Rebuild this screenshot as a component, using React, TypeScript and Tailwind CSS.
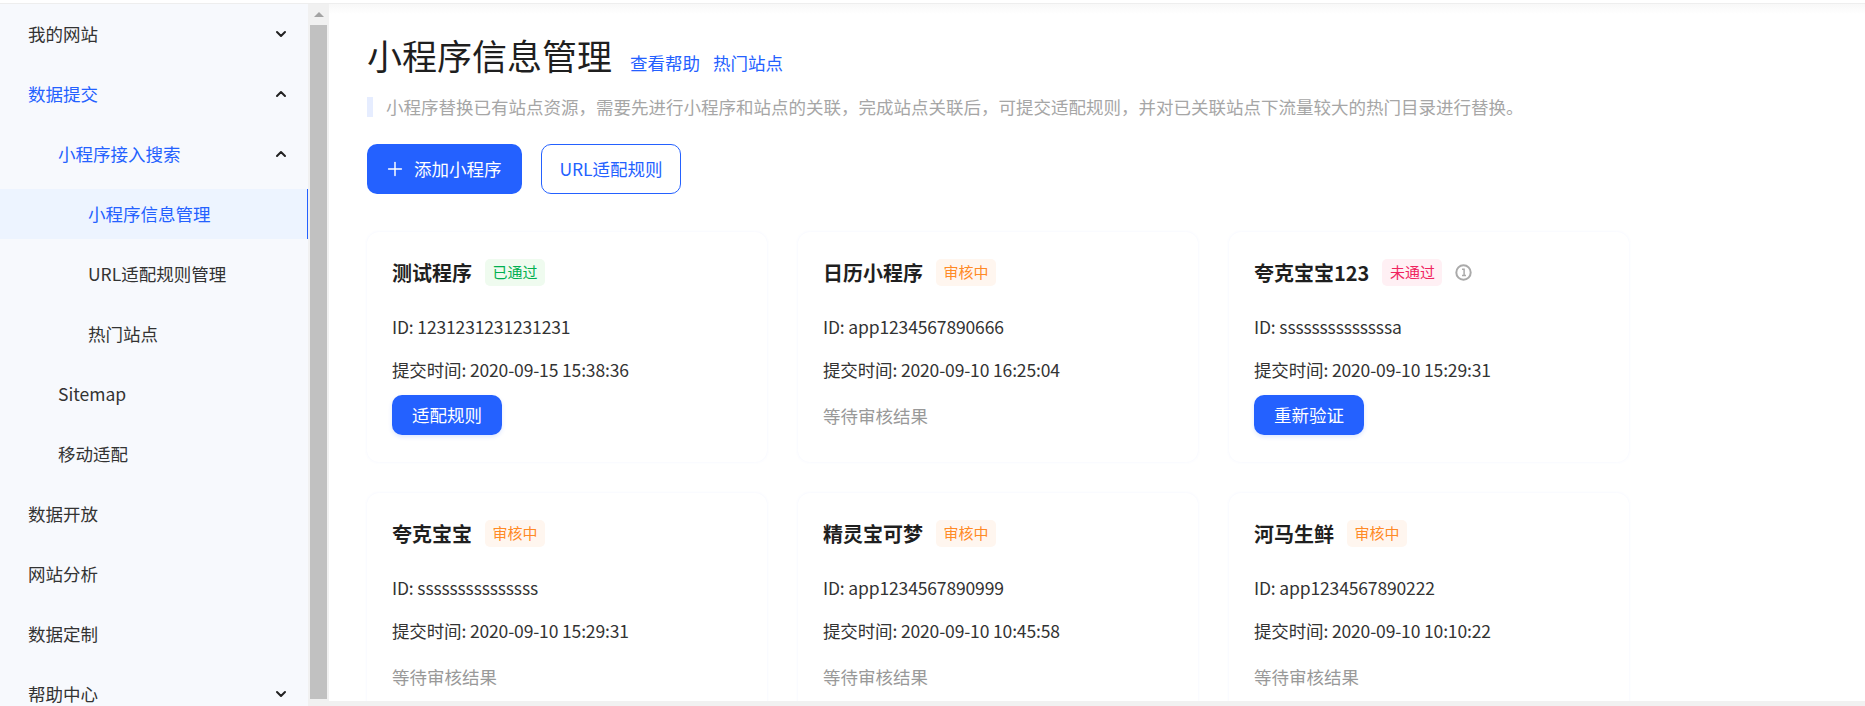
import { Plus, ChevronDown, ChevronUp } from "lucide-react";

const FONT = "[font-family:'Noto_Sans_CJK_SC','Noto_Sans',sans-serif]";

type NavItem = { label: string; level: 0 | 1 | 2; active?: boolean; open?: boolean; current?: boolean };

const navItems: NavItem[] = [
  { label: "我的网站", level: 0, open: false },
  { label: "数据提交", level: 0, active: true, open: true },
  { label: "小程序接入搜索", level: 1, active: true, open: true },
  { label: "小程序信息管理", level: 2, active: true, current: true },
  { label: "URL适配规则管理", level: 2 },
  { label: "热门站点", level: 2 },
  { label: "Sitemap", level: 1 },
  { label: "移动适配", level: 1 },
  { label: "数据开放", level: 0 },
  { label: "网站分析", level: 0 },
  { label: "数据定制", level: 0 },
  { label: "帮助中心", level: 0, open: false },
];

type Status = "ok" | "pending" | "failed";

type Program = { name: string; id: string; time: string; status: Status; action?: string };

const programs: Program[] = [
  { name: "测试程序", id: "1231231231231231", time: "2020-09-15 15:38:36", status: "ok", action: "适配规则" },
  { name: "日历小程序", id: "app1234567890666", time: "2020-09-10 16:25:04", status: "pending" },
  { name: "夸克宝宝123", id: "ssssssssssssssa", time: "2020-09-10 15:29:31", status: "failed", action: "重新验证" },
  { name: "夸克宝宝", id: "sssssssssssssss", time: "2020-09-10 15:29:31", status: "pending" },
  { name: "精灵宝可梦", id: "app1234567890999", time: "2020-09-10 10:45:58", status: "pending" },
  { name: "河马生鲜", id: "app1234567890222", time: "2020-09-10 10:10:22", status: "pending" },
];

function Badge({ status }: { status: Status }) {
  if (status === "ok") {
    return <span className="flex h-[27px] w-[60px] items-center justify-center rounded-[5px] bg-[#effbef] text-[15px] text-[#00b050]">已通过</span>;
  }
  if (status === "failed") {
    return <span className="flex h-[27px] w-[60px] items-center justify-center rounded-[5px] bg-[#fff0f4] text-[15px] text-[#f0245f]">未通过</span>;
  }
  return <span className="flex h-[27px] w-[60px] items-center justify-center rounded-[5px] bg-[#fff6ef] text-[15px] text-[#ff8a26]">审核中</span>;
}

function InfoIcon() {
  return (
    <svg width="17" height="17" viewBox="0 0 17 17" className="ml-[13px]" fill="none">
      <circle cx="8.5" cy="8.5" r="7.2" stroke="#aaaaaa" strokeWidth="2" />
      <path d="M7 5.2h2.1v6.2M7 11.6h4" stroke="#aaaaaa" strokeWidth="1.5" />
    </svg>
  );
}

function Card({ p }: { p: Program }) {
  return (
    <div className="h-[230px] w-[400px] rounded-[12px] bg-white px-[25px] pt-[27px] shadow-[0_0_3px_rgba(90,110,255,0.08)]">
      <div className="flex h-[27px] items-center">
        <span className="text-[20px] font-bold text-[#1f1f1f]">{p.name}</span>
        <span className="ml-[13px]"><Badge status={p.status} /></span>
        {p.status === "failed" && <InfoIcon />}
      </div>
      <div className="mt-[27px] h-[27px] text-[17.5px] leading-[27px] tracking-[-0.15px] text-[#333]">ID: {p.id}</div>
      <div className="mt-[16px] h-[27px] text-[17.5px] leading-[27px] tracking-[-0.15px] text-[#333]">提交时间: {p.time}</div>
      {p.action ? (
        <button className="mt-[12px] h-[40px] w-[110px] rounded-[10px] bg-[#2461ff] text-[17.5px] text-white shadow-[0_2px_4px_rgba(36,97,255,0.15)]">
          {p.action}
        </button>
      ) : (
        <div className="mt-[19px] h-[27px] text-[17.5px] leading-[27px] text-[#999]">等待审核结果</div>
      )}
    </div>
  );
}

function Sidebar() {
  return (
    <div className="flex h-full w-[308px] shrink-0 flex-col overflow-hidden bg-[#f7f9fd] text-[17.5px]">
      {navItems.map((item) => (
        <div key={item.label} className="flex h-[60px] shrink-0 items-center">
          <div
            className={`flex h-[50px] w-full items-center justify-between pr-[19px] ${item.current ? "border-r border-[#2461ff] bg-[#edf4ff]" : ""} ${
              item.level === 0 ? "pl-[28px]" : item.level === 1 ? "pl-[58px]" : "pl-[88px]"
            } ${item.active ? "text-[#2461ff]" : "text-[#333]"}`}
          >
            <span>{item.label}</span>
            {item.open === false && <ChevronDown size={16} strokeWidth={3} className="text-[#222]" />}
            {item.open === true && <ChevronUp size={16} strokeWidth={3} className="text-[#222]" />}
          </div>
        </div>
      ))}
    </div>
  );
}

function Scrollbar() {
  return (
    <div className="flex h-full w-[21px] shrink-0 flex-col items-center bg-[#f1f1f1]">
      <div className="flex h-[21px] w-full shrink-0 items-center justify-center">
        <div className="h-0 w-0 border-x-[5px] border-b-[5px] border-x-transparent border-b-[#a3a3a3]" />
      </div>
      <div className="mb-[2px] w-[17px] flex-1 bg-[#c1c1c1]" />
    </div>
  );
}

export default function App() {
  return (
    <div className={`flex h-[706px] w-[1865px] flex-col overflow-hidden bg-white ${FONT}`}>
      <div className="h-[4px] shrink-0 border-b border-[#eeeeee] bg-white" />
      <div className="flex min-h-0 flex-1">
        <Sidebar />
        <div className="flex min-w-0 flex-1 flex-col">
          <div className="flex min-h-0 flex-1">
            <Scrollbar />
            <div className="min-w-0 flex-1 overflow-hidden bg-[linear-gradient(#f8f8f8,#ffffff_10px)] pl-[38px]">
              <div className="mt-[26px] flex items-baseline">
                <h1 className="text-[35px] leading-[50px] font-normal text-[#1f1f1f]">小程序信息管理</h1>
                <a className="ml-[18px] text-[17.5px] text-[#2461ff]">查看帮助</a>
                <a className="ml-[13px] text-[17.5px] text-[#2461ff]">热门站点</a>
              </div>
              <div className="mt-[17px] flex h-[20px] items-center">
                <div className="h-[20px] w-[6px] bg-[#e6edff]" />
                <p className="ml-[13px] text-[17.5px] text-[#a6a6a6]">
                  小程序替换已有站点资源，需要先进行小程序和站点的关联，完成站点关联后，可提交适配规则，并对已关联站点下流量较大的热门目录进行替换。
                </p>
              </div>
              <div className="mt-[27px] flex gap-[19px]">
                <button className="flex h-[50px] w-[155px] items-center gap-[8px] rounded-[10px] bg-[#2461ff] pl-[17px] text-[17.5px] text-white">
                  <Plus size={22} strokeWidth={1.6} />
                  添加小程序
                </button>
                <button className="h-[50px] w-[140px] rounded-[10px] border border-[#2461ff] bg-white text-[17.5px] text-[#2461ff]">
                  URL适配规则
                </button>
              </div>
              <div className="mt-[38px] grid w-[1262px] grid-cols-3 gap-[31px]">
                {programs.map((p) => (
                  <Card key={p.name} p={p} />
                ))}
              </div>
            </div>
          </div>
          <div className="h-[5px] shrink-0 bg-[#f1f1f1]" />
        </div>
      </div>
    </div>
  );
}
